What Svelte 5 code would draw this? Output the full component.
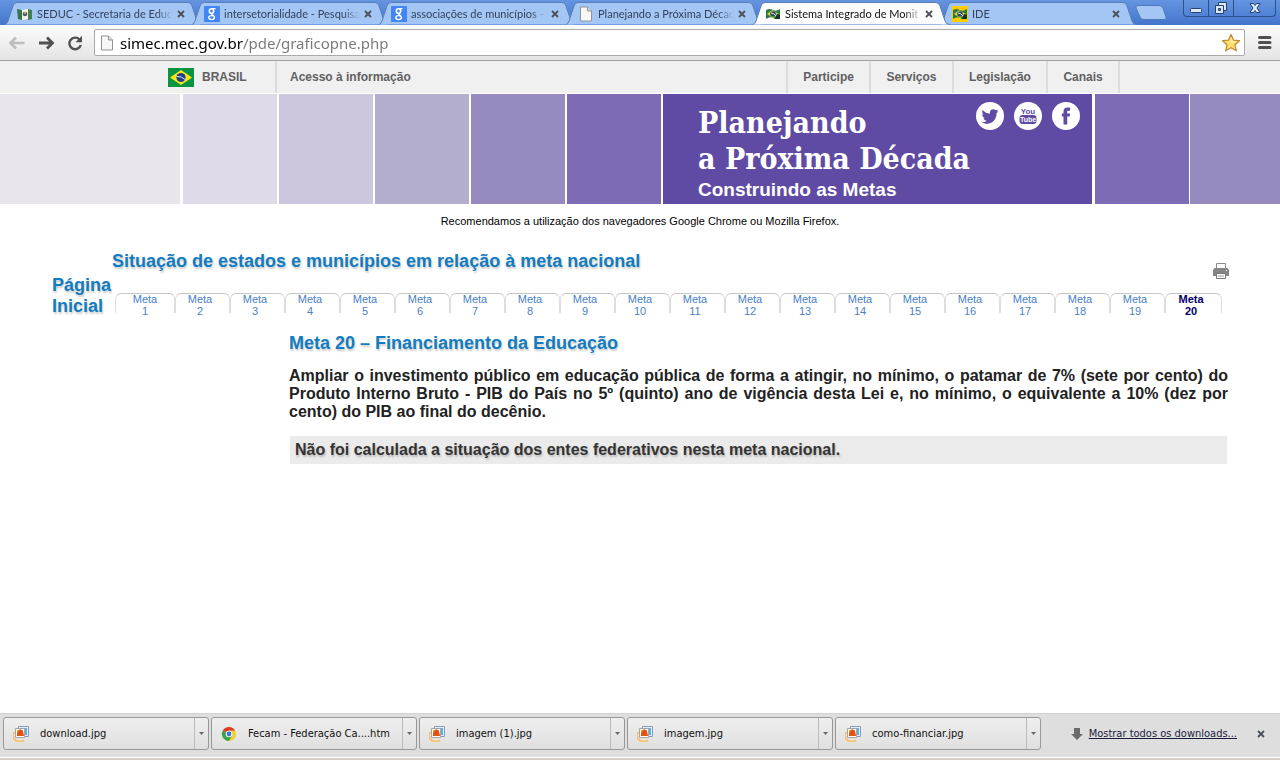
<script lang="ts">
  type Tab = { title: string; icon: string; active?: boolean };

  const tabs: Tab[] = [
    { title: "SEDUC - Secretaria de Educ", icon: "seduc" },
    { title: "intersetorialidade - Pesquisa", icon: "google" },
    { title: "associações de municípios -", icon: "google" },
    { title: "Planejando a Próxima Décad", icon: "page" },
    { title: "Sistema Integrado de Monit", icon: "simec", active: true },
    { title: "IDE", icon: "ide" },
  ];

  const menu = ["Participe", "Serviços", "Legislação", "Canais"];
  const metas = Array.from({ length: 20 }, (_, i) => i + 1);
  const current = 20;

  const downloads = [
    { name: "download.jpg", icon: "image" },
    { name: "Fecam - Federação Ca....htm", icon: "chrome" },
    { name: "imagem (1).jpg", icon: "image" },
    { name: "imagem.jpg", icon: "image" },
    { name: "como-financiar.jpg", icon: "image" },
  ];

  let url = "simec.mec.gov.br/pde/graficopne.php";
</script>

{#snippet cross()}
  <svg width="8" height="8" viewBox="0 0 8 8"><path d="M1 1l6 6M7 1L1 7" stroke="#4b5058" stroke-width="1.8" /></svg>
{/snippet}

{#snippet favicon(name: string)}
  <svg class="favicon" width="16" height="16" viewBox="0 0 16 16">
    {#if name === "google"}
      <rect width="16" height="16" rx="1" fill="#4285f4" />
      <g fill="none" stroke="#fff">
        <ellipse cx="7.5" cy="5" rx="2.2" ry="2.3" stroke-width="1.6" />
        <path d="M8 2.6h3.5M8.5 7.3c-2 1 .4 1.600 1.300 2.600" stroke-width="1.300" />
        <ellipse cx="7.600" cy="11.600" rx="2.800" ry="2" stroke-width="1.400" />
      </g>
    {:else if name === "page"}
      <path d="M2.500 1h7l4 4v10h-11z" fill="#f7f7f7" stroke="#929292" />
      <path d="M9.500 1v4h4" fill="#ddd" stroke="#929292" />
    {:else if name === "seduc"}
      <path d="M0 3l5 1v10l-4-1z" fill="#38734a" />
      <path d="M5 4l6-1v10l-6 1z" fill="#f2f4ef" />
      <path d="M11 3l4 1v9l-4 1z" fill="#477d52" />
      <circle cx="8" cy="8" r="2.300" fill="#465b63" />
      <path d="M7 6h2v2H7z" fill="#b9a05a" />
    {:else}
      {#if name === "ide"}<rect width="16" height="16" fill="#fc0" />{/if}
      <path d="M1 4q4-2 7 0t7-1v9q-4 2-7 0t-7 1z" fill="#287847" />
      <path d="M2 8l5-4 7 4-6 4z" fill="#d8cf35" />
      <circle cx="8" cy="8" r="2.800" fill="#254f6e" />
      <path d="M6 7q3 0 5 3" fill="none" stroke="#dfe8db" />
      <path d="M12 8l3 1v4h-5z" fill="#17322a" />
    {/if}
  </svg>
{/snippet}

<div class="window">
  <header class="tabstrip">
    {#each tabs as tab}
      <div class="tab" class:active={tab.active}>
        <svg class="shape" viewBox="0 0 197 23" preserveAspectRatio="none">
          <path d="M0 22.500Q2 22 3 19L8 4Q9 .5 12 .5H183Q186 .5 187 4L192 19Q193 22.500 197 22.500" />
        </svg>
        {@render favicon(tab.icon)}
        <span class="title">{tab.title}</span>
        <button aria-label="Fechar guia">{@render cross()}</button>
      </div>
    {/each}
    <button class="newtab" aria-label="Nova guia">
      <svg width="32" height="16" viewBox="0 0 32 16"><path d="M3 .5H24Q27 .5 28 3L31 12Q32 14.500 29 14.500H9Q6 14.500 5 12L1 3Q.5.5 3 .5Z" fill="#a4c6f5" stroke="#5079bc" /></svg>
    </button>
    <div class="controls">
      <button aria-label="Minimizar">
        <svg width="12" height="12" viewBox="0 0 12 12"><rect x=".5" y="6.500" width="11" height="4" rx="1" fill="#dce9fc" stroke="#26436f" /></svg>
      </button>
      <button aria-label="Restaurar">
        <svg width="14" height="14" viewBox="0 0 14 14" fill="#dce9fc" stroke="#26436f"><path d="M4.500 1.500h8v8h-8z" /><path d="M1.500 4.500h8v8h-8z" /><path d="M4.500 7.500h2v2h-2z" fill="#527fc9" /></svg>
      </button>
      <button class="wide" aria-label="Fechar">
        <svg width="12" height="12" viewBox="0 0 12 12"><path d="M1 1.500h3.500L6 3.500 7.500 1.500H11L8 6l3 4.500H7.500L6 8.500l-1.500 2H1L4 6z" fill="#dce9fc" stroke="#26436f" /></svg>
      </button>
    </div>
  </header>

  <div class="toolbar">
    <button aria-label="Voltar">
      <svg width="18" height="16" viewBox="0 0 18 16"><path d="M8 2.500L2.500 8 8 13.500M3 8h13.500" fill="none" stroke="#bdbdbd" stroke-width="2.600" /></svg>
    </button>
    <button aria-label="Avançar">
      <svg width="18" height="16" viewBox="0 0 18 16"><path d="M10 2.500L15.500 8 10 13.500M15 8H2" fill="none" stroke="#505050" stroke-width="2.800" /></svg>
    </button>
    <button aria-label="Recarregar">
      <svg width="18" height="16" viewBox="0 0 18 16"><path d="M13.500 4.500A5.800 5.800 0 1 0 14.800 10" fill="none" stroke="#505050" stroke-width="2.400" /><path d="M16 .8v6.400H9.500z" fill="#505050" /></svg>
    </button>
    <div class="omnibox">
      {@render favicon("page")}
      <input type="text" aria-label="Endereço" bind:value={url} />
      <button aria-label="Favorito">
        <svg width="20" height="20" viewBox="0 0 20 20"><path d="M10 1.500l2.500 5.600 6 .6-4.500 4.100 1.300 6-5.300-3.100-5.300 3.100 1.300-6L1.500 7.700l6-.6z" fill="#ffe06c" stroke="#c08a3a" stroke-width="1.300" stroke-linejoin="round" /><path d="M10 4l1.500 4 4 .7-5.500 1z" fill="#fff3b5" /></svg>
      </button>
    </div>
    <button class="burger" aria-label="Menu">
      <svg width="14" height="13" viewBox="0 0 14 13"><path d="M1.500 1.500h10.500M1.500 6.500h10.500M1.500 11.500h10.500" stroke="#505050" stroke-width="3" stroke-linecap="round" /></svg>
    </button>
  </div>

  <nav class="govbar">
    <div class="inner">
      <a class="brasil" href="#brasil">
        <svg width="26" height="19" viewBox="0 0 26 19"><rect width="26" height="19" fill="#099444" /><path d="M13 2l11 7.500L13 17 2 9.500z" fill="#fbe417" /><circle cx="13" cy="9.500" r="4.600" fill="#1c3f8c" /><path d="M8.700 8.500q5-.5 8.300 3" fill="none" stroke="#dfe8f2" /></svg>
        BRASIL
      </a>
      <a class="acesso" href="#acesso">Acesso à informação</a>
      <ul>
        {#each menu as item}
          <li><a href="#menu">{item}</a></li>
        {/each}
      </ul>
    </div>
  </nav>

  <div class="banner">
    <span class="s1"></span>
    <span class="s2"></span>
    <span class="s3"></span>
    <span class="s4"></span>
    <span class="s5"></span>
    <span class="s6"></span>
    <div class="brand">
      <div>
        <h1>Planejando<br />a Próxima Década</h1>
        <p>Construindo as Metas</p>
      </div>
      <div class="social">
        <a href="#twitter" aria-label="Twitter">
          <svg width="28" height="28" viewBox="0 0 28 28"><circle cx="14" cy="14" r="14" fill="#fff" /><path d="M22.500 9.200l-2 2c.2 6-4 10.500-9.500 10.500-2 0-3.800-.6-5.300-1.500 2 .1 3.700-.4 5-1.500-1.700-.2-2.800-1.200-3.200-2.500h1.500C7.300 15.600 6.100 14.200 6.100 12.300l1.600.5C6.200 11.500 5.800 9.700 6.700 8c2 2.300 4.300 3.500 7.200 3.700-.5-2.500 1-4.500 3.400-4.500 1 0 1.900.4 2.500 1.100l2.300-.8-1.300 1.900z" fill="#604ba4" /></svg>
        </a>
        <a href="#youtube" aria-label="YouTube">
          <svg width="28" height="28" viewBox="0 0 28 28">
            <circle cx="14" cy="14" r="14" fill="#fff" />
            <rect x="5.500" y="13" width="17" height="9" rx="3" fill="#604ba4" />
            <text x="14" y="12">You</text>
            <text x="14" y="20" class="tube">Tube</text>
          </svg>
        </a>
        <a href="#facebook" aria-label="Facebook">
          <svg width="28" height="28" viewBox="0 0 28 28"><circle cx="14" cy="14" r="14" fill="#fff" /><path d="M11.500 22.500v-8H9.800v-3h1.700V9.700c0-2.800 1.300-4.200 4-4.200h2.600v3.200h-1.600c-1 0-1.300.4-1.300 1.300v1.500h2.900l-.4 3h-2.500v8z" fill="#604ba4" /></svg>
        </a>
      </div>
    </div>
    <span class="s7"></span>
    <span class="s8"></span>
  </div>

  <main>
    <p class="notice">Recomendamos a utilização dos navegadores Google Chrome ou Mozilla Firefox.</p>

    <div class="heading">
      <h2>Situação de estados e municípios em relação à meta nacional</h2>
      <button aria-label="Imprimir">
        <svg width="16" height="16" viewBox="0 0 16 16"><path d="M3.500 6V.5h9V6" fill="#fff" stroke="#8a8a8a" /><path d="M1.500 5h13L16 7v6H0V7z" fill="#858585" /><path d="M3.500 10.500h9v5h-9z" fill="#fff" stroke="#777" /><path d="M5 13h6" stroke="#999" /><path d="M13 7h1v1h-1z" fill="#fff" /></svg>
      </button>
    </div>

    <nav class="metas">
      <a class="home" href="#inicio">Página<br />Inicial</a>
      <ul>
        {#each metas as n}
          <li class:current={n === current}><a href="#meta{n}">Meta<br />{n}</a></li>
        {/each}
      </ul>
    </nav>

    <section>
      <h2>Meta 20 – Financiamento da Educação</h2>
      <p>
        Ampliar o investimento público em educação pública de forma a atingir, no mínimo, o patamar de 7% (sete por cento)
        do Produto Interno Bruto - PIB do País no 5º (quinto) ano de vigência desta Lei e, no mínimo, o equivalente a 10%
        (dez por cento) do PIB ao final do decênio.
      </p>
      <div class="status">Não foi calculada a situação dos entes federativos nesta meta nacional.</div>
    </section>
  </main>

  <footer>
    {#each downloads as file}
      <div class="download">
        <button class="file">
          <svg width="16" height="16" viewBox="0 0 16 16">
            {#if file.icon === "chrome"}
              <circle cx="8" cy="8" r="7" fill="#f8cf2c" />
              <path d="M8 8L1.900 4.500A7 7 0 0 1 14.100 4.500H8z" fill="#dc3a2c" />
              <path d="M8 8L1.900 4.500A7 7 0 0 0 8 15l3-5.200z" fill="#3ba04e" />
              <circle cx="8" cy="8" r="3.300" fill="#fff" />
              <circle cx="8" cy="8" r="2.400" fill="#3a7bd0" />
            {:else}
              <path d="M1 6a6.500 6.500 0 0 0 10 8" fill="none" stroke="#fbc068" stroke-width="2" />
              <path d="M5.500.5h10v10h-10z" fill="#dff0ff" stroke="#8d9cae" />
              <path d="M7 2h7v7H7z" fill="#5aaef2" />
              <path d="M2.500 2.500h9v9h-9z" fill="#fff" stroke="#a6a6a6" />
              <path d="M4 4h6v6H4z" fill="#f9a93c" />
              <path d="M4 10V7l3-4 3 2 1 5z" fill="#e8500f" />
            {/if}
          </svg>
          {file.name}
        </button>
        <button class="more" aria-label="Opções">
          <svg width="5" height="3" viewBox="0 0 5 3"><path d="M0 0h5L2.500 3z" fill="#666" /></svg>
        </button>
      </div>
    {/each}
    <a class="all" href="#downloads">
      <svg width="12" height="12" viewBox="0 0 12 12"><path d="M3 0h6v6h3l-6 6-6-6h3z" fill="#6b6b6b" /></svg>
      <span>Mostrar todos os downloads...</span>
    </a>
    <button class="close" aria-label="Fechar">{@render cross()}</button>
  </footer>
</div>

<style>
  :global(body) {
    margin: 0;
    background: #fff;
  }
  .window {
    min-height: 100vh;
    display: flex;
    flex-direction: column;
    font-family: "Liberation Sans", Arial, sans-serif;
  }
  button {
    display: flex;
    align-items: center;
    justify-content: center;
    border: 0;
    padding: 0;
    background: none;
    color: inherit;
    font: inherit;
  }
  a {
    color: inherit;
    text-decoration: none;
  }
  ul {
    display: flex;
    margin: 0;
    padding: 0;
    list-style: none;
  }
  h1,
  h2,
  p {
    margin: 0;
  }
  svg {
    flex: none;
  }

  .tabstrip {
    display: flex;
    height: 25px;
    padding-left: 5px;
    background: linear-gradient(#6595e0, #4475cc);
    font: 11px Lato, Tahoma, sans-serif;
    color: #33415c;
  }
  .tab {
    position: relative;
    display: flex;
    align-items: center;
    box-sizing: border-box;
    flex: 0 1 197px;
    min-width: 0;
    height: 23px;
    margin: 2px -10px 0 0;
    padding: 0 17px 0 12px;
  }
  .tab.active {
    z-index: 1;
    color: #111;
  }
  .shape {
    position: absolute;
    inset: 0;
    width: 100%;
    height: 100%;
    fill: #a4c6f5;
    stroke: #587fb9;
  }
  .active .shape {
    fill: #fcfcfc;
  }
  .tab .favicon,
  .tab button {
    position: relative;
  }
  .title {
    position: relative;
    flex: 1;
    margin: 0 4px;
    overflow: hidden;
    white-space: nowrap;
    mask-image: linear-gradient(to right, #000 88%, transparent);
  }
  .newtab {
    align-self: flex-start;
    margin: 5px 0 0 8px;
  }
  .controls {
    display: flex;
    height: 16px;
    margin: 0 4px 0 auto;
    border: 1px solid #2c4f8e;
    border-top: 0;
    border-radius: 0 0 4px 4px;
  }
  .controls button {
    width: 25px;
    border-right: 1px solid #2c4f8e;
  }
  .controls .wide {
    width: 41px;
    border: 0;
  }

  .toolbar {
    display: flex;
    align-items: center;
    height: 35px;
    padding: 0 6px 0 8px;
    border-bottom: 1px solid #a0a0a0;
    background: linear-gradient(#fcfcfc, #e4e4e4);
  }
  .toolbar > button {
    margin-right: 11px;
  }
  .omnibox {
    display: flex;
    flex: 1;
    align-items: center;
    box-sizing: border-box;
    height: 27px;
    margin-left: -1px;
    padding: 0 3px 0 4px;
    border: 1px solid #aaa;
    border-radius: 2px;
    background: #fff;
  }
  .omnibox input {
    flex: 1;
    min-width: 0;
    border: 0;
    padding: 0;
    margin-left: 5px;
    outline: 0;
    font: 15px "Noto Sans", sans-serif;
    /* host in black, path in grey */
    color: transparent;
    background: linear-gradient(to right, #000 123px, #777 123px);
    background-clip: text;
  }
  .toolbar .burger {
    margin: 0 2px 0 13px;
  }

  .govbar {
    background: #f0f0f0;
    color: #606060;
    font-size: 12px;
    font-weight: bold;
  }
  .inner {
    display: flex;
    box-sizing: border-box;
    max-width: 960px;
    height: 32px;
    margin: 0 auto;
    padding-left: 8px;
    line-height: 32px;
  }
  .brasil {
    display: flex;
    align-items: center;
    gap: 8px;
    width: 107px;
    border-right: 2px solid #dcdcdc;
  }
  .acesso {
    margin-left: 13px;
  }
  .inner ul {
    width: 332px;
    margin-left: auto;
    border-right: 2px solid #dcdcdc;
  }
  .inner li {
    flex: 1 1 auto;
    border-left: 2px solid #dcdcdc;
    text-align: center;
  }

  .banner {
    display: flex;
    gap: 2px;
    height: 110px;
    margin-top: 1px;
  }
  .banner span {
    flex: 0 1 94px;
  }
  .banner .s1 {
    flex: 2 0 0;
    margin-right: 1px;
    background: #e8e6ec;
  }
  .s2 { background: #dedae9; }
  .s3 { background: #cdc7de; }
  .s4 { background: #b4aece; }
  .s5 { background: #978ac1; }
  .s6 { background: #7d6bb5; }
  .s7 { background: #7d6bb5; }
  .banner .s8 {
    flex: 1 0 0;
    margin-left: -1px;
    background: #978ac1;
  }
  .brand {
    display: flex;
    justify-content: space-between;
    box-sizing: border-box;
    width: 429px;
    padding: 11px 12px 0 35px;
    margin-right: 1px;
    background: #604ba4;
    color: #fff;
  }
  .brand h1 {
    font: bold 30px/36px "DejaVu Serif Condensed", "DejaVu Serif", serif;
    white-space: nowrap;
  }
  .brand p {
    font-size: 19px;
    font-weight: bold;
    line-height: 26px;
  }
  .social {
    display: flex;
    gap: 10px;
    height: 28px;
    margin-top: -3px;
  }
  .social text {
    font: bold 8px "Liberation Sans", Arial, sans-serif;
    fill: #604ba4;
    text-anchor: middle;
  }
  .social .tube {
    font-size: 7px;
    fill: #fff;
  }

  main {
    flex: 1;
    padding: 0 52px;
  }
  .notice {
    padding-top: 10px;
    font-size: 11px;
    line-height: 14px;
    text-align: center;
  }
  h2,
  .home {
    color: #137cc1;
    font-size: 18px;
    font-weight: bold;
    line-height: 21px;
    text-shadow: 1px 2px 2px #ccc;
  }
  .heading {
    display: flex;
    justify-content: space-between;
    margin: 23px 0 0 60px;
  }
  .heading button {
    margin: 12px -1px 0 0;
    height: 16px;
  }
  .metas {
    display: flex;
    padding-right: 6px;
  }
  .home {
    width: 63px;
    margin-top: -4px;
  }
  .metas ul {
    flex: 1;
    margin-top: 14px;
  }
  .metas li {
    flex: 53 1 0;
    box-sizing: border-box;
    height: 20px;
    border: 1px solid #ddd;
    border-top-color: #c4c4c4;
    border-bottom: 0;
    border-radius: 6px 6px 0 0;
    color: #4a7fc8;
    font-size: 11px;
    line-height: 12px;
    text-align: center;
  }
  .metas li a {
    display: block;
    margin: -1px 5px 0 0;
  }
  .metas li:first-child {
    flex-grow: 58;
  }
  .metas li:first-child a {
    margin-right: 0;
  }
  .metas li:last-child {
    flex-grow: 55;
  }
  .metas .current {
    color: #000066;
    font-weight: bold;
  }

  section {
    margin: 16px 0 0 237px;
  }
  section p {
    margin: 13px 0 15px;
    color: #222;
    font-size: 16px;
    font-weight: bold;
    line-height: 18px;
    text-align: justify;
  }
  .status {
    margin: 0 1px;
    padding: 5px;
    background: #ebebeb;
    color: #333;
    font-size: 16px;
    font-weight: bold;
    line-height: 18px;
    text-shadow: 1px 2px 2px #bbb;
  }

  footer {
    display: flex;
    align-items: center;
    gap: 2px;
    height: 33px;
    padding: 3px 15px 8px 3px;
    border-top: 1px solid #d2d2d2;
    border-bottom: 2px solid #d4d0c8;
    background: #dedede;
    box-shadow: inset 0 -1px #fff;
    font: 11px "DejaVu Sans Condensed", Tahoma, sans-serif;
    color: #111;
  }
  .download {
    display: flex;
    box-sizing: border-box;
    flex: 0 1 206px;
    height: 33px;
    border: 1px solid #999;
    border-radius: 3px;
    background: linear-gradient(#efefef, #dfdfdf);
  }
  .file {
    flex: 1;
    justify-content: flex-start;
    gap: 11px;
    padding-left: 9px;
    white-space: nowrap;
  }
  .more {
    width: 14px;
    border-left: 1px solid #bbb;
  }
  .all {
    display: flex;
    align-items: center;
    gap: 6px;
    margin-left: auto;
    color: #1c1c3c;
  }
  .all span {
    text-decoration: underline;
  }
  .close {
    margin-left: 18px;
  }
</style>
